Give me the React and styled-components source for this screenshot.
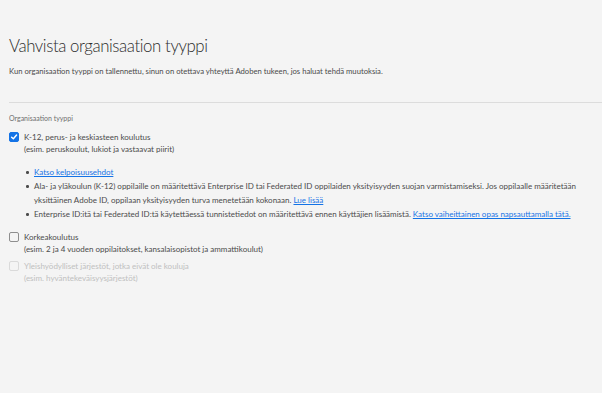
import React from "react";
import styled, { createGlobalStyle } from "styled-components";

const Global = createGlobalStyle`
  html, body { margin: 0; padding: 0; background: #f4f4f4; }
  body { font-family: Lato, "Liberation Sans", sans-serif; color: #4b4b4b; }
`;

const Page = styled.div`
  width: 602px;
  height: 393px;
  box-sizing: border-box;
  padding: 34px 0 0 9px;
  background: #f4f4f4;
  overflow: hidden;
`;

const Title = styled.h1`
  margin: 0;
  font-size: 16.8px;
  letter-spacing: -0.4px;
  font-weight: 300;
  color: #2c2c2c;
  line-height: 24px;
`;

const Lead = styled.p`
  margin: 7px 0 0;
  font-size: 7.7px;
  line-height: 12px;
`;

const Divider = styled.hr`
  margin: 25px 0 0;
  border: 0;
  border-top: 1px solid #dcdcdc;
`;

const SectionLabel = styled.div`
  margin-top: 10px;
  font-size: 7px;
  line-height: 10px;
  color: #6e6e6e;
`;

const Options = styled.div`
  margin-top: 8px;
  display: flex;
  flex-direction: column;
`;

const Option = styled.label`
  display: flex;
  gap: 5px;
  align-items: flex-start;
  font-size: 8px;
  line-height: 12px;
  color: ${(p) => (p.$disabled ? "#c0c0c0" : "#4b4b4b")};
  margin-bottom: ${(p) => p.$gap || 0}px;
`;

const Box = styled.span`
  flex: none;
  width: 10px;
  height: 10px;
  margin-top: 1px;
  box-sizing: border-box;
  border-radius: 2px;
  border: 1px solid ${(p) => (p.$checked ? "#1473e6" : p.$disabled ? "#dadada" : "#8e8e8e")};
  background: ${(p) => (p.$checked ? "#1473e6" : "transparent")};
  display: flex;
  align-items: center;
  justify-content: center;
`;

const OptionText = styled.div`
  display: flex;
  flex-direction: column;
`;

const Bullets = styled.ul`
  margin: 10px 0 10px;
  padding: 0 0 0 25px;
  width: 552px;
  list-style: none;
  font-size: 8px;
  line-height: 14px;
  color: #4b4b4b;
`;

const Bullet = styled.li`
  position: relative;
  &::before {
    content: "";
    position: absolute;
    left: -8px;
    top: 6px;
    width: 2.5px;
    height: 2.5px;
    border-radius: 50%;
    background: #4b4b4b;
  }
`;

const Link = styled.a`
  color: #1473e6;
  text-decoration: underline;
`;

const Check = () => (
  <svg width="8" height="8" viewBox="0 0 10 10">
    <path d="M2 5.2 L4.2 7.3 L8.2 2.6" fill="none" stroke="#fff" strokeWidth="1.8" strokeLinecap="round" strokeLinejoin="round" />
  </svg>
);

export default function App() {
  return (
    <Page>
      <Global />
      <Title>Vahvista organisaation tyyppi</Title>
      <Lead>
        Kun organisaation tyyppi on tallennettu, sinun on otettava yhteyttä Adoben tukeen, jos haluat tehdä muutoksia.
      </Lead>
      <Divider />
      <SectionLabel>Organisaation tyyppi</SectionLabel>
      <Options>
        <Option>
          <Box $checked>
            <Check />
          </Box>
          <OptionText>
            <span>K-12, perus- ja keskiasteen koulutus</span>
            <span>(esim. peruskoulut, lukiot ja vastaavat piirit)</span>
          </OptionText>
        </Option>
        <Bullets>
          <Bullet>
            <Link href="#">Katso kelpoisuusehdot</Link>
          </Bullet>
          <Bullet>
            Ala- ja yläkoulun (K-12) oppilaille on määritettävä Enterprise ID tai Federated ID oppilaiden yksityisyyden suojan varmistamiseksi. Jos oppilaalle määritetään yksittäinen Adobe ID, oppilaan yksityisyyden turva menetetään kokonaan.{" "}
            <Link href="#">Lue lisää</Link>
          </Bullet>
          <Bullet>
            Enterprise ID:itä tai Federated ID:tä käytettäessä tunnistetiedot on määritettävä ennen käyttäjien lisäämistä.{" "}
            <Link href="#">Katso vaiheittainen opas napsauttamalla tätä.</Link>
          </Bullet>
        </Bullets>
        <Option $gap={5}>
          <Box />
          <OptionText>
            <span>Korkeakoulutus</span>
            <span>(esim. 2 ja 4 vuoden oppilaitokset, kansalaisopistot ja ammattikoulut)</span>
          </OptionText>
        </Option>
        <Option $disabled>
          <Box $disabled />
          <OptionText>
            <span>Yleishyödylliset järjestöt, jotka eivät ole kouluja</span>
            <span>(esim. hyväntekeväisyysjärjestöt)</span>
          </OptionText>
        </Option>
      </Options>
    </Page>
  );
}
